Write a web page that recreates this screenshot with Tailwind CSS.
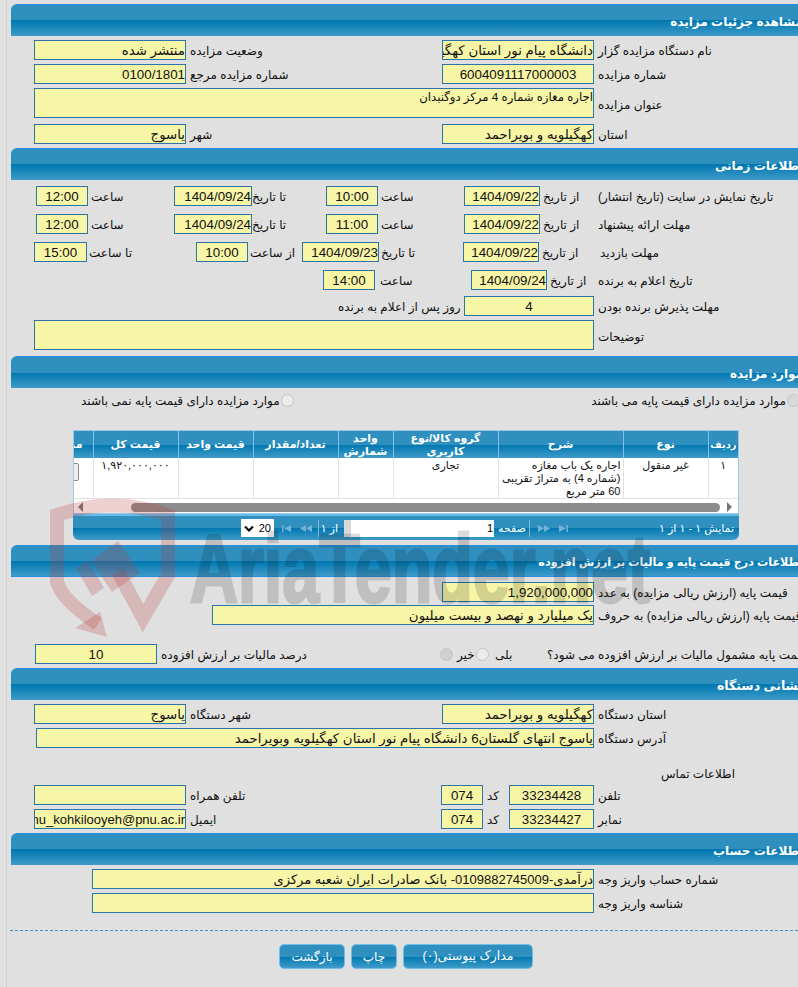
<!DOCTYPE html>
<html lang="fa">

<head>
    <meta charset="UTF-8" />
    <title>مشاهده جزئیات مزایده</title>
    <script src="https://cdn.jsdelivr.net/npm/@tailwindcss/browser@4"></script>
</head>

<body class="bg-[#e0e0e0] font-['Liberation_Sans','DejaVu_Sans',sans-serif] text-[12px] text-[#111]">
    <div class="relative w-[798px] h-[987px] overflow-hidden pt-1">
        <div class="absolute left-[6px] top-0 bottom-0 w-px bg-[#cfcfcf]"></div>

        <!-- Details -->
        <div dir="rtl" class="ml-[11px] h-8 border-t border-[#2a8fdc] rounded-tl-md bg-[linear-gradient(#2f90c0_0,#2f90c0_50%,#0077b0_50%,#3f9bc9_100%)] text-white font-bold text-[12px] leading-[32px] pt-px -mr-[5px]">مشاهده جزئیات مزایده</div>
        <div class="flex items-center h-5 mt-1 pl-[34px]">
            <div dir="rtl" class="w-[152px] h-5 border border-[#2a76ac] bg-[#f7f5a6] leading-[19px] text-[13.33px] whitespace-nowrap overflow-hidden">منتشر شده</div>
            <div dir="rtl" class="w-[256px] pl-1 pt-[2px] text-left">وضعیت مزایده</div>
            <div dir="rtl" class="w-[152px] h-5 border border-[#2a76ac] bg-[#f7f5a6] leading-[19px] text-[13.33px] whitespace-nowrap overflow-hidden">دانشگاه پیام نور استان کهگیلویه و بویراحمد</div>
            <div dir="rtl" class="pl-1 pt-[2px] text-left">نام دستگاه مزایده گزار</div>
        </div>
        <div class="flex items-center h-5 mt-1 pl-[34px]">
            <div class="w-[152px] h-5 border border-[#2a76ac] bg-[#f7f5a6] leading-[19px] text-[13.33px] text-right">0100/1801</div>
            <div dir="rtl" class="w-[256px] pl-1 pt-[2px] text-left">شماره مزایده مرجع</div>
            <div class="w-[152px] h-5 border border-[#2a76ac] bg-[#f7f5a6] leading-[19px] text-[13.33px] text-center">6004091117000003</div>
            <div dir="rtl" class="pl-1 pt-[2px] text-left">شماره مزایده</div>
        </div>
        <div class="flex items-center h-[30px] mt-1 pl-[34px]">
            <div dir="rtl" class="w-[560px] h-[30px] border border-[#2a76ac] bg-[#f7f5a6] leading-[16px] text-[11.7px]">اجاره مغازه شماره 4 مرکز دوگنبدان</div>
            <div dir="rtl" class="pl-1 pt-[4px] text-left">عنوان مزایده</div>
        </div>
        <div class="flex items-center h-5 mt-[6px] pl-[34px]">
            <div dir="rtl" class="w-[152px] h-5 border border-[#2a76ac] bg-[#f7f5a6] leading-[19px] text-[13.33px]">یاسوج</div>
            <div dir="rtl" class="w-[256px] pl-1 pt-[2px] text-left">شهر</div>
            <div dir="rtl" class="w-[152px] h-5 border border-[#2a76ac] bg-[#f7f5a6] leading-[19px] text-[13.33px]">کهگیلویه و بویراحمد</div>
            <div dir="rtl" class="pl-1 pt-[2px] text-left">استان</div>
        </div>

        <!-- Dates -->
        <div dir="rtl" class="ml-[11px] mt-1 h-8 border-t border-[#2a8fdc] rounded-tl-md bg-[linear-gradient(#2f90c0_0,#2f90c0_50%,#0077b0_50%,#3f9bc9_100%)] text-white font-bold text-[12px] leading-[32px] pt-px -mr-[5px]">اطلاعات زمانی</div>
        <div class="flex items-center h-5 mt-[6px] pl-[36px]">
            <div class="w-[52px] h-5 border border-[#2a76ac] bg-[#f7f5a6] leading-[19px] text-[13.33px] text-center">12:00</div>
            <div dir="rtl" class="w-[86px] pl-[3px] pt-[2px] text-left">ساعت</div>
            <div class="w-[78px] h-5 border border-[#2a76ac] bg-[#f7f5a6] leading-[19px] text-[13.33px] text-right">1404/09/24</div>
            <div dir="rtl" class="w-[74px] pt-[2px] text-left">تا تاریخ</div>
            <div class="w-[52px] h-5 border border-[#2a76ac] bg-[#f7f5a6] leading-[19px] text-[13.33px] text-center">10:00</div>
            <div dir="rtl" class="w-[86px] pl-[3px] pt-[2px] text-left">ساعت</div>
            <div class="w-[76px] h-5 border border-[#2a76ac] bg-[#f7f5a6] leading-[19px] text-[13.33px] text-right">1404/09/22</div>
            <div dir="rtl" class="w-[58px] pl-[3px] pt-[2px] text-left">از تاریخ</div>
            <div dir="rtl" class="pt-[2px] text-left">تاریخ نمایش در سایت (تاریخ انتشار)</div>
        </div>
        <div class="flex items-center h-5 mt-2 pl-[36px]">
            <div class="w-[52px] h-5 border border-[#2a76ac] bg-[#f7f5a6] leading-[19px] text-[13.33px] text-center">12:00</div>
            <div dir="rtl" class="w-[86px] pl-[3px] pt-[2px] text-left">ساعت</div>
            <div class="w-[78px] h-5 border border-[#2a76ac] bg-[#f7f5a6] leading-[19px] text-[13.33px] text-right">1404/09/24</div>
            <div dir="rtl" class="w-[74px] pt-[2px] text-left">تا تاریخ</div>
            <div class="w-[52px] h-5 border border-[#2a76ac] bg-[#f7f5a6] leading-[19px] text-[13.33px] text-center">11:00</div>
            <div dir="rtl" class="w-[86px] pl-[3px] pt-[2px] text-left">ساعت</div>
            <div class="w-[76px] h-5 border border-[#2a76ac] bg-[#f7f5a6] leading-[19px] text-[13.33px] text-right">1404/09/22</div>
            <div dir="rtl" class="w-[58px] pl-[3px] pt-[2px] text-left">از تاریخ</div>
            <div dir="rtl" class="pt-[2px] text-left">مهلت ارائه پیشنهاد</div>
        </div>
        <div class="flex items-center h-5 mt-2 pl-[34px]">
            <div class="w-[53px] h-5 border border-[#2a76ac] bg-[#f7f5a6] leading-[19px] text-[13.33px] text-center">15:00</div>
            <div dir="rtl" class="w-[109px] pl-[2px] pt-[2px] text-left">تا ساعت</div>
            <div class="w-[52px] h-5 border border-[#2a76ac] bg-[#f7f5a6] leading-[19px] text-[13.33px] text-center">10:00</div>
            <div dir="rtl" class="w-[54px] pl-[2px] pt-[2px] text-left">از ساعت</div>
            <div class="w-[77px] h-5 border border-[#2a76ac] bg-[#f7f5a6] leading-[19px] text-[13.33px] text-right">1404/09/23</div>
            <div dir="rtl" class="w-[84px] pl-[2px] pt-[2px] text-left">تا تاریخ</div>
            <div class="w-[76px] h-5 border border-[#2a76ac] bg-[#f7f5a6] leading-[19px] text-[13.33px] text-right">1404/09/22</div>
            <div dir="rtl" class="w-[59px] pl-[3px] pt-[2px] text-left">از تاریخ</div>
            <div dir="rtl" class="pl-[2px] pt-[2px] text-left">مهلت بازدید</div>
        </div>
        <div class="flex items-center h-5 mt-2 pl-[323px]">
            <div class="w-[52px] h-5 border border-[#2a76ac] bg-[#f7f5a6] leading-[19px] text-[13.33px] text-center">14:00</div>
            <div dir="rtl" class="w-[96px] pl-[5px] pt-[2px] text-left">ساعت</div>
            <div class="w-[76px] h-5 border border-[#2a76ac] bg-[#f7f5a6] leading-[19px] text-[13.33px] text-right">1404/09/24</div>
            <div dir="rtl" class="w-[51px] pl-[3px] pt-[2px] text-left">از تاریخ</div>
            <div dir="rtl" class="pt-[2px] text-left">تاریخ اعلام به برنده</div>
        </div>
        <div class="flex items-center h-5 mt-[6px] pl-[338px]">
            <div dir="rtl" class="w-[126px] pt-[2px] text-left">روز پس از اعلام به برنده</div>
            <div class="w-[130px] h-5 border border-[#2a76ac] bg-[#f7f5a6] leading-[19px] text-[13.33px] text-center">4</div>
            <div dir="rtl" class="pl-1 pt-[2px] text-left">مهلت پذیرش برنده بودن</div>
        </div>
        <div class="flex items-center h-[30px] mt-1 pl-[34px]">
            <div class="w-[560px] h-[30px] border border-[#2a76ac] bg-[#f7f5a6]"></div>
            <div dir="rtl" class="pl-1 pt-[4px] text-left">توضیحات</div>
        </div>

        <!-- Items -->
        <div dir="rtl" class="ml-[11px] mt-[6px] h-8 border-t border-[#2a8fdc] rounded-tl-md bg-[linear-gradient(#2f90c0_0,#2f90c0_50%,#0077b0_50%,#3f9bc9_100%)] text-white font-bold text-[12px] leading-[32px] pt-px -mr-[5px]">موارد مزایده</div>
        <div class="flex items-center h-5 mt-[2px] pl-[81px] *:shrink-0">
            <div dir="rtl" class="w-[510px] flex items-center justify-end">
                <span class="size-[13px] rounded-full border border-[#c4c4c4] bg-[#ececec]"></span>
                <span class="mr-px pt-[2px]">موارد مزایده دارای قیمت پایه نمی باشند</span>
            </div>
            <div dir="rtl" class="w-[209px] flex items-center whitespace-nowrap">
                <span class="size-[13px] shrink-0 rounded-full border border-[#c4c4c4] bg-[#d8d8d8]"></span>
                <span class="mr-px pt-[2px]">موارد مزایده دارای قیمت پایه می باشند</span>
            </div>
        </div>

        <div class="ml-[73px] mt-[20px] w-[666px] h-[84px] border border-[#9cc9e6] bg-white overflow-hidden" dir="rtl">
            <table class="table-fixed border-collapse w-[666px] text-[11px]">
                <colgroup>
                    <col class="w-[30px]" /><col class="w-[85px]" /><col class="w-[125px]" /><col class="w-[105px]" /><col class="w-[55px]" /><col class="w-[85px]" /><col class="w-[75px]" /><col class="w-[85px]" /><col class="w-[21px]" />
                </colgroup>
                <thead class="bg-[linear-gradient(#2f90c0_0,#2f90c0_50%,#0077b0_50%,#3f9bc9_100%)] text-white font-bold">
                    <tr class="h-[27px] leading-[13px]">
                        <th class="border-l border-[#7cc3ea] font-bold text-[10px]">ردیف</th>
                        <th class="border-l border-[#7cc3ea] font-bold">نوع</th>
                        <th class="border-l border-[#7cc3ea] font-bold">شرح</th>
                        <th class="border-l border-[#7cc3ea] font-bold">گروه کالا/نوع کاربری</th>
                        <th class="border-l border-[#7cc3ea] font-bold">واحد شمارش</th>
                        <th class="border-l border-[#7cc3ea] font-bold">تعداد/مقدار</th>
                        <th class="border-l border-[#7cc3ea] font-bold">قیمت واحد</th>
                        <th class="border-l border-[#7cc3ea] font-bold">قیمت کل</th>
                        <th class="font-bold whitespace-nowrap overflow-hidden text-right pr-[10px]">مدارک</th>
                    </tr>
                </thead>
                <tbody>
                    <tr class="h-10 align-top border-b border-[#e2e2e2] leading-[13px]">
                        <td class="border-l border-[#e2e2e2] text-center pt-px">۱</td>
                        <td class="border-l border-[#e2e2e2] text-center pt-px">غیر منقول</td>
                        <td class="border-l border-[#e2e2e2] px-[2px] pt-px">اجاره یک باب مغازه (شماره 4) به متراژ تقریبی 60 متر مربع</td>
                        <td class="border-l border-[#e2e2e2] text-center pt-px">تجاری</td>
                        <td class="border-l border-[#e2e2e2]"></td>
                        <td class="border-l border-[#e2e2e2]"></td>
                        <td class="border-l border-[#e2e2e2]"></td>
                        <td class="border-l border-[#e2e2e2] text-center pt-px whitespace-nowrap">۱,۹۲۰,۰۰۰,۰۰۰</td>
                        <td class="relative"><div class="absolute left-[-13px] top-[5px] w-5 h-[18px] border border-[#8a8a8a] rounded-[2px] bg-[#efefef]"></div></td>
                    </tr>
                </tbody>
            </table>
            <div class="flex items-center h-4" dir="ltr">
                <span class="w-0 h-0 border-y-[5px] border-y-transparent border-r-[5px] border-r-[#777] ml-[4px]"></span>
                <div class="ml-[48px] w-[589px] h-[9px] rounded-full bg-[#8c8c8c]"></div>
                <span class="w-0 h-0 border-y-[5px] border-y-transparent border-l-[5px] border-l-[#777] ml-[7px]"></span>
            </div>
        </div>
        <div class="ml-[73px] w-[666px] h-[26px] border-t-2 border-[#66bce6] rounded-b-md bg-[linear-gradient(#2f90c0_0,#2f90c0_50%,#0077b0_50%,#3f9bc9_100%)] text-white flex items-center pl-[168px]">
            <div class="w-[33px] h-[18px] bg-white text-black flex items-center justify-between px-[3px] text-[11px]">
                <svg width="10" height="7" viewBox="0 0 10 7"><path d="M1 1.500 L5 5.500 L9 1.500" fill="none" stroke="#000" stroke-width="2" /></svg>
                <span>20</span>
            </div>
            <svg class="ml-[8px]" width="30" height="7" viewBox="0 0 30 7" fill="#73b4d6"><path d="M0 0h1.500v7H0zM9 0v7L2 3.500zM24 0v7L18 3.500zM30 0v7L24 3.500z" /></svg>
            <span class="ml-[6px] w-px h-[17px] bg-[#7fbcdc]"></span>
            <span dir="rtl" class="ml-[2px] w-[23px] pr-[6px] whitespace-nowrap text-[11px]">از ۱</span>
            <div class="w-[150px] h-[17px] bg-white text-black text-[11px] leading-[17px] text-right pr-px border-l-[7px] border-[#d8d8d8]">1</div>
            <span dir="rtl" class="ml-1 text-[11px]">صفحه</span>
            <span class="ml-[3px] w-px h-[17px] bg-[#7fbcdc]"></span>
            <svg class="ml-2" width="30" height="7" viewBox="0 0 30 7" fill="#73b4d6"><path d="M0 0v7L6 3.500zM6 0v7L12 3.500zM21 0v7L28 3.500zM28.500 0H30v7h-1.500z" /></svg>
            <span dir="rtl" class="ml-auto pr-[5px] text-[11px]">نمایش ۱ - ۱ از ۱</span>
        </div>

        <!-- Price -->
        <div dir="rtl" class="ml-[11px] mt-[5px] h-8 border-y border-[#2a8fdc] rounded-tl-md bg-[linear-gradient(#2f90c0_0,#2f90c0_50%,#0077b0_50%,#3f9bc9_100%)] text-white font-bold text-[11.2px] leading-[30px] pt-px -mr-[5px]">اطلاعات درج قیمت پایه و مالیات بر ارزش افزوده</div>
        <div class="flex items-center h-5 mt-[5px] pl-[442px]">
            <div class="w-[152px] h-5 border border-[#2a76ac] bg-[#f7f5a6] leading-[19px] text-[13.33px] text-right">1,920,000,000</div>
            <div dir="rtl" class="pl-1 pt-[2px] text-left">قیمت پایه (ارزش ریالی مزایده) به عدد</div>
        </div>
        <div class="flex items-center h-5 mt-[3px] pl-[212px] *:shrink-0">
            <div dir="rtl" class="w-[382px] h-5 border border-[#2a76ac] bg-[#f7f5a6] leading-[19px] text-[13.33px]">یک میلیارد و نهصد و بیست میلیون</div>
            <div dir="rtl" class="pl-1 pt-[2px] text-left whitespace-nowrap">قیمت پایه (ارزش ریالی مزایده) به حروف</div>
        </div>
        <div class="flex items-center h-5 mt-[19px] pl-[35px] *:shrink-0">
            <div class="w-[122px] h-5 border border-[#2a76ac] bg-[#f7f5a6] leading-[19px] text-[13.33px] text-center">10</div>
            <div dir="rtl" class="w-[283px] pl-1 pt-[2px] text-left">درصد مالیات بر ارزش افزوده</div>
            <span class="size-[13px] rounded-full border border-[#c4c4c4] bg-[#cfcfcf]"></span>
            <span class="w-[23px] pl-[4px] pt-[2px]">خیر</span>
            <span class="size-[13px] rounded-full border border-[#c4c4c4] bg-[#ececec]"></span>
            <span class="w-[58px] pl-[6px] pt-[2px]">بلی</span>
            <div dir="rtl" class="pt-[2px] whitespace-nowrap">قیمت پایه مشمول مالیات بر ارزش افزوده می شود؟</div>
        </div>

        <!-- Address -->
        <div dir="rtl" class="ml-[11px] mt-1 h-8 border-t border-[#2a8fdc] rounded-tl-md bg-[linear-gradient(#2f90c0_0,#2f90c0_50%,#0077b0_50%,#3f9bc9_100%)] text-white font-bold text-[12.5px] leading-[32px] pt-px -mr-[5px]">نشانی دستگاه</div>
        <div class="flex items-center h-5 mt-1 pl-[34px]">
            <div dir="rtl" class="w-[152px] h-5 border border-[#2a76ac] bg-[#f7f5a6] leading-[19px] text-[13.33px]">یاسوج</div>
            <div dir="rtl" class="w-[256px] pl-1 pt-[2px] text-left">شهر دستگاه</div>
            <div dir="rtl" class="w-[152px] h-5 border border-[#2a76ac] bg-[#f7f5a6] leading-[19px] text-[13.33px]">کهگیلویه و بویراحمد</div>
            <div dir="rtl" class="pl-1 pt-[2px] text-left">استان دستگاه</div>
        </div>
        <div class="flex items-center h-5 mt-1 pl-[36px]">
            <div dir="rtl" class="w-[558px] h-5 border border-[#2a76ac] bg-[#f7f5a6] leading-[19px] text-[13.33px] whitespace-nowrap overflow-hidden">یاسوج انتهای گلستان6 دانشگاه پیام نور استان کهگیلویه وبویراحمد</div>
            <div dir="rtl" class="pl-1 pt-[2px] text-left">آدرس دستگاه</div>
        </div>
        <div dir="rtl" class="h-5 mt-[17px] pr-[63px] text-right">اطلاعات تماس</div>
        <div class="flex items-center h-5 pl-[34px]">
            <div class="w-[152px] h-5 border border-[#2a76ac] bg-[#f7f5a6]"></div>
            <div dir="rtl" class="w-[255px] pl-1 pt-[2px] text-left">تلفن همراه</div>
            <div class="w-[42px] h-5 border border-[#2a76ac] bg-[#f7f5a6] leading-[19px] text-[13.33px] text-center">074</div>
            <div dir="rtl" class="w-[26px] pl-1 pt-[2px] text-left">کد</div>
            <div class="w-[85px] h-5 border border-[#2a76ac] bg-[#f7f5a6] leading-[19px] text-[13.33px] text-center">33234428</div>
            <div dir="rtl" class="pl-1 pt-[2px] text-left">تلفن</div>
        </div>
        <div class="flex items-center h-5 mt-1 pl-[34px]">
            <div class="w-[152px] h-5 border border-[#2a76ac] bg-[#f7f5a6] leading-[19px] text-[13px] whitespace-nowrap overflow-hidden flex justify-end">pnu_kohkilooyeh@pnu.ac.ir</div>
            <div dir="rtl" class="w-[255px] pl-1 pt-[2px] text-left">ایمیل</div>
            <div class="w-[42px] h-5 border border-[#2a76ac] bg-[#f7f5a6] leading-[19px] text-[13.33px] text-center">074</div>
            <div dir="rtl" class="w-[26px] pl-1 pt-[2px] text-left">کد</div>
            <div class="w-[85px] h-5 border border-[#2a76ac] bg-[#f7f5a6] leading-[19px] text-[13.33px] text-center">33234427</div>
            <div dir="rtl" class="pl-1 pt-[2px] text-left">نمابر</div>
        </div>

        <!-- Account -->
        <div dir="rtl" class="ml-[11px] mt-1 h-8 border-t border-[#2a8fdc] rounded-tl-md bg-[linear-gradient(#2f90c0_0,#2f90c0_50%,#0077b0_50%,#3f9bc9_100%)] text-white font-bold text-[12px] leading-[32px] pt-px -mr-[5px]">اطلاعات حساب</div>
        <div class="flex items-center h-5 mt-1 pl-[92px]">
            <div dir="rtl" class="w-[502px] h-5 border border-[#2a76ac] bg-[#f7f5a6] leading-[19px] text-[13px] whitespace-nowrap overflow-hidden">درآمدی-0109882745009- بانک صادرات ایران شعبه مرکزی</div>
            <div dir="rtl" class="pl-1 pt-[2px] text-left">شماره حساب واریز وجه</div>
        </div>
        <div class="flex items-center h-5 mt-1 pl-[92px]">
            <div class="w-[502px] h-5 border border-[#2a76ac] bg-[#f7f5a6]"></div>
            <div dir="rtl" class="pl-1 pt-[2px] text-left">شناسه واریز وجه</div>
        </div>
        <div class="ml-[10px] mt-[17px] border-t border-dashed border-[#3f8fc0]"></div>
        <div class="flex gap-[6px] pl-[279px] mt-[13px]">
            <button class="w-[66px] h-[25px] rounded-[5px] border border-[#6fbfe8] bg-[linear-gradient(#2f90c0_0,#2f90c0_50%,#0077b0_50%,#3f9bc9_100%)] text-white text-[12px]">بازگشت</button>
            <button class="w-[46px] h-[25px] rounded-[5px] border border-[#6fbfe8] bg-[linear-gradient(#2f90c0_0,#2f90c0_50%,#0077b0_50%,#3f9bc9_100%)] text-white text-[12px]">چاپ</button>
            <button dir="rtl" class="w-[130px] h-[25px] rounded-[5px] border border-[#6fbfe8] bg-[linear-gradient(#2f90c0_0,#2f90c0_50%,#0077b0_50%,#3f9bc9_100%)] text-white text-[12.5px]">مدارک پیوستی(۰)</button>
        </div>

        <!-- Watermark over the page -->
        <svg class="absolute left-0 top-0 pointer-events-none" width="798" height="987" viewBox="0 0 798 987">
            <path d="M98 624 Q 62 600 57 582 L 57 515 Q 112 496 168 515 L 168 575 L 143 618 L 118 572" fill="none" stroke="#b93c3c" stroke-opacity="0.24" stroke-width="14" />
            <g fill="#b93c3c" fill-opacity="0.24">
                <path d="M107 637 L100 612 L75 628 Z" />
                <path d="M91 561 L118 541 L140 573 L112 592 Z" />
                <path d="M76 568 L88 560 L104 588 L92 596 Z" />
            </g>
            <g opacity="0.14">
                <text x="190" y="602" font-family="Liberation Sans" font-weight="700" font-size="96" textLength="460" lengthAdjust="spacingAndGlyphs" fill="#000" stroke="#000" stroke-width="3">AriaTender.net</text>
            </g>
        </svg>
    </div>
</body>

</html>
